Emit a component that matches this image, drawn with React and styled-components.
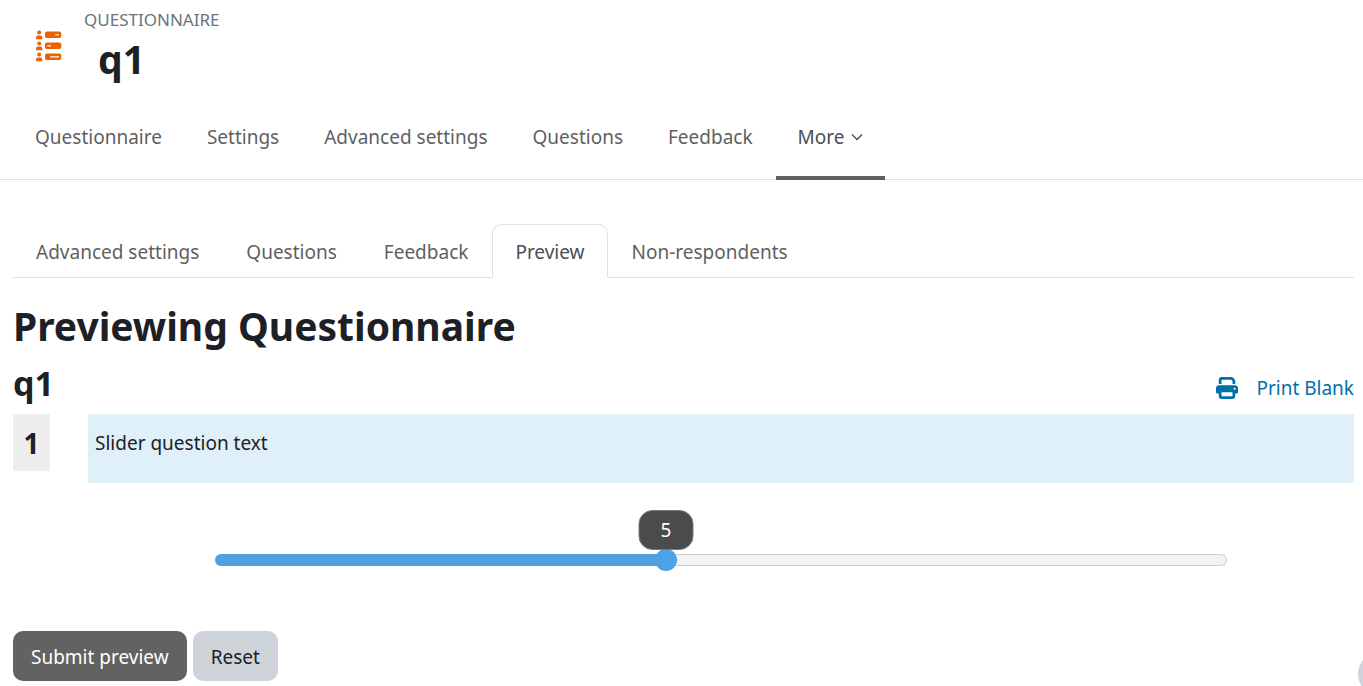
import React, { useState } from "react"
import styled, { createGlobalStyle } from "styled-components"
import { FaPrint } from "react-icons/fa6"

const colors = {
  text: "#1d2125",
  muted: "#6a737b",
  nav: "#5f5f5f",
  active: "#495057",
  border: "#dee2e6",
  link: "#0070a8",
  primary: "#626262",
  secondary: "#ced4da",
  question: "#dff0f9",
  number: "#eeeeee",
  slider: "#4ea1e3",
  icon: "#eb6200",
}

const navItems = [
  "Questionnaire",
  "Settings",
  "Advanced settings",
  "Questions",
  "Feedback",
]

const tabs = [
  "Advanced settings",
  "Questions",
  "Feedback",
  "Preview",
  "Non-respondents",
]

const MIN = 1
const MAX = 10

const App = () => (
  <>
    <GlobalStyle />
    <Header>
      <ActivityIcon />
      <div>
        <ActivityType>Questionnaire</ActivityType>
        <ActivityName>q1</ActivityName>
      </div>
    </Header>
    <Nav aria-label="Activity">
      {navItems.map(item => (
        <NavLink key={item} href="#">
          {item}
        </NavLink>
      ))}
      <MoreButton type="button" aria-haspopup="menu">
        More
        <Chevron viewBox="0 0 12 8" aria-hidden="true">
          <path d="M1 1.5l5 5 5-5" />
        </Chevron>
      </MoreButton>
    </Nav>
    <Main>
      <Tabs aria-label="Questionnaire sections">
        {tabs.map(tab => (
          <Tab key={tab} href="#" $active={tab === "Preview"}>
            {tab}
          </Tab>
        ))}
      </Tabs>
      <Title>Previewing Questionnaire</Title>
      <SubHeader>
        <SubTitle>q1</SubTitle>
        <PrintLink href="#">
          <FaPrint size={22} aria-hidden="true" />
          Print Blank
        </PrintLink>
      </SubHeader>
      <form onSubmit={e => e.preventDefault()}>
        <Question number={1} text="Slider question text" />
        <Buttons>
          <Button type="submit" $primary>
            Submit preview
          </Button>
          <Button type="reset">Reset</Button>
        </Buttons>
      </form>
    </Main>
    <HelpButton type="button" aria-label="Help" />
  </>
)

const Question = ({ number, text }) => {
  const [value, setValue] = useState(5)
  const ratio = (value - MIN) / (MAX - MIN)

  return (
    <QuestionRow>
      <Number>{number}</Number>
      <QuestionBody>
        <QuestionText htmlFor="slider">{text}</QuestionText>
        <SliderWrap style={{ "--ratio": ratio }}>
          <Bubble htmlFor="slider">{value}</Bubble>
          <Slider
            id="slider"
            type="range"
            min={MIN}
            max={MAX}
            value={value}
            onChange={e => setValue(e.target.valueAsNumber)}
          />
        </SliderWrap>
      </QuestionBody>
    </QuestionRow>
  )
}

const ActivityIcon = () => (
  <Icon viewBox="0 0 26 32" aria-hidden="true">
    {[0, 11, 22].map(y => (
      <g key={y} transform={`translate(0 ${y})`}>
        <circle cx="3.2" cy="2.5" r="2" />
        <path d="M0 9.2V8Q0 5.6 2 5.6h2.4q2 0 2 2.4v1.2z" />
        <rect x="9" y="1.4" width="16.2" height="6.6" rx="1.8" />
      </g>
    ))}
    <Slots>
      <rect x="19.3" y="4" width="3.8" height="1.6" />
      <rect x="11.3" y="15" width="3.8" height="1.6" />
      <rect x="14.2" y="26" width="8.9" height="1.6" />
    </Slots>
  </Icon>
)

const GlobalStyle = createGlobalStyle`
  * {
    box-sizing: border-box;
  }

  body {
    margin: 0;
    background-color: #fff;
    color: ${colors.text};
    font-family: "Segoe UI", "Noto Sans", sans-serif;
    font-size: 19px;
    line-height: 32px;
  }

  button {
    font: inherit;
    cursor: pointer;
  }
`

const Header = styled.header`
  display: flex;
  align-items: flex-start;
  gap: 22px;
  padding: 8px 36px 0;
`

const Icon = styled.svg`
  width: 26px;
  height: 32px;
  margin-top: 22px;
  fill: ${colors.icon};
`

const Slots = styled.g`
  fill: #fbd3b5;
`

const ActivityType = styled.div`
  color: ${colors.muted};
  font-size: 17px;
  line-height: 24px;
  text-transform: uppercase;
`

const ActivityName = styled.h1`
  margin: 0;
  padding-left: 14px;
  font-size: 39px;
  line-height: 54px;
`

const Nav = styled.nav`
  display: flex;
  gap: 1px;
  height: 94px;
  padding: 0 13px;
  border-bottom: 1px solid ${colors.border};
`

const NavLink = styled.a`
  padding: 35px 22px 0;
  color: ${colors.nav};
  text-decoration: none;
`

const MoreButton = styled.button`
  display: flex;
  align-items: center;
  gap: 6px;
  margin-bottom: -1px;
  padding: 12px 22px 0;
  border: 0;
  border-bottom: 4px solid ${colors.nav};
  background: none;
  color: ${colors.active};
`

const Chevron = styled.svg`
  width: 12px;
  height: 8px;
  fill: none;
  stroke: currentColor;
  stroke-width: 1.5;
`

const Main = styled.main`
  padding: 44px 9px 0 13px;
`

const Tabs = styled.nav`
  display: flex;
  gap: 1px;
  border-bottom: 1px solid ${colors.border};
`

const Tab = styled.a`
  margin-bottom: -1px;
  padding: 11px 22px 10px;
  border: 1px solid transparent;
  border-bottom: 0;
  border-radius: 10px 10px 0 0;
  color: ${colors.nav};
  text-decoration: none;

  ${({ $active }) =>
    $active &&
    `
    border-color: ${colors.border};
    background-color: #fff;
    color: ${colors.active};
  `}
`

const Title = styled.h2`
  margin: 21px 0 0;
  font-size: 39px;
  line-height: 54px;
`

const SubHeader = styled.div`
  display: flex;
  align-items: flex-end;
  justify-content: space-between;
  padding: 9px 0 10px;
`

const SubTitle = styled.h3`
  margin: 0;
  font-size: 34px;
  line-height: 42px;
`

const PrintLink = styled.a`
  display: flex;
  align-items: center;
  gap: 18px;
  color: ${colors.link};
  text-decoration: none;
`

const QuestionRow = styled.div`
  display: flex;
  align-items: flex-start;
  gap: 38px;
`

const Number = styled.div`
  width: 37px;
  padding: 13px 0 12px;
  background-color: ${colors.number};
  font-size: 28px;
  font-weight: 700;
  text-align: center;
`

const QuestionBody = styled.div`
  flex: 1;
`

const QuestionText = styled.label`
  display: block;
  padding: 13px 7px 24px;
  background-color: ${colors.question};
`

const SliderWrap = styled.div`
  position: relative;
  width: 80%;
  margin: 0 auto;
  padding: 66px 0;
`

const Bubble = styled.output`
  position: absolute;
  top: 27px;
  left: calc(11px + (100% - 22px) * var(--ratio));
  width: 55px;
  padding: 3px 0;
  transform: translateX(-50%);
  border: 1px solid #777;
  border-radius: 14px;
  background-color: #4b4b4b;
  color: #fff;
  text-align: center;
`

const Slider = styled.input`
  display: block;
  width: 100%;
  height: 22px;
  margin: 0;
  appearance: none;
  background: none;

  &::-webkit-slider-runnable-track {
    height: 12px;
    border: 1px solid transparent;
    border-radius: 6px;
    background:
      linear-gradient(${colors.slider}, ${colors.slider}) 0 0 /
        calc(11px + (100% - 22px) * var(--ratio)) 100% no-repeat border-box,
      linear-gradient(#f2f2f2, #f2f2f2) padding-box,
      linear-gradient(#d0d0d0, #d0d0d0) border-box;
  }

  &::-webkit-slider-thumb {
    width: 22px;
    height: 22px;
    margin-top: -6px;
    appearance: none;
    border-radius: 50%;
    background-color: ${colors.slider};
  }
`

const Buttons = styled.div`
  display: flex;
  gap: 6px;
  margin-top: -6px;
`

const Button = styled.button`
  padding: 10px 18px 8px;
  border: 0;
  border-radius: 10px;
  background-color: ${({ $primary }) =>
    $primary ? colors.primary : colors.secondary};
  color: ${({ $primary }) => ($primary ? "#fff" : colors.text)};
`

const HelpButton = styled.button`
  position: fixed;
  right: -41px;
  bottom: -11px;
  width: 46px;
  height: 46px;
  border: 0;
  border-radius: 50%;
  background-color: ${colors.secondary};
`

export default App
